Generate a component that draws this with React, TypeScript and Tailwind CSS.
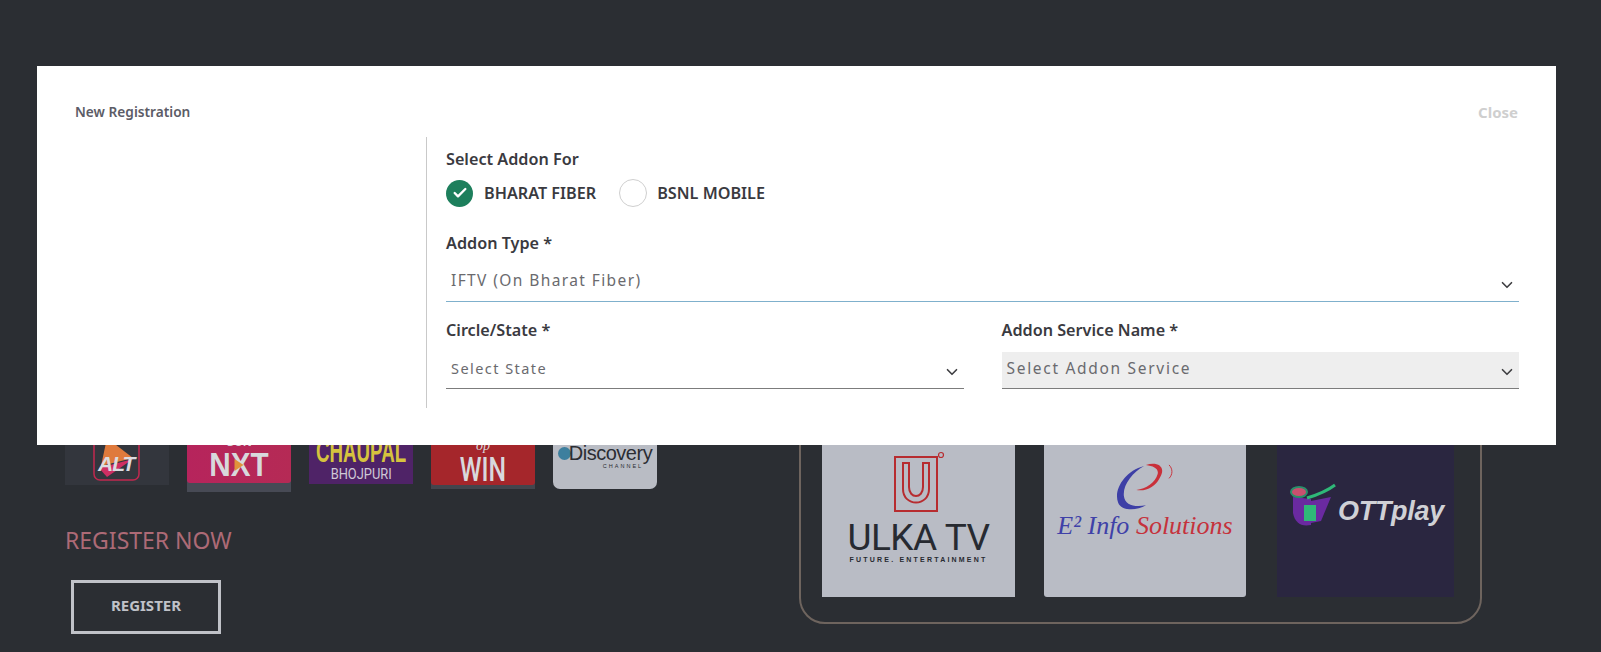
import { Check, ChevronDown } from 'lucide-react';

function AltTile() {
  return (
    <div className="flex h-[100px] w-[104px] flex-col items-center justify-end bg-[#33363d] pb-[3px]">
      <svg width="48" height="50" viewBox="0 0 48 50">
        <rect x="1" y="-10" width="45" height="58" rx="6" fill="none" stroke="#c2284f" strokeWidth="1.5" />
        <path d="M14 6 L40 26 L8 34 Z" fill="#df7a3c" />
        <path d="M6 36 L40 27 L14 45 Z" fill="#cf2f63" />
        <text x="5" y="39" fontFamily="Liberation Sans" fontSize="21" fontWeight="700" fontStyle="italic" fill="#dcdce0" letterSpacing="-1">ALT</text>
      </svg>
    </div>
  );
}

function SunTile() {
  return (
    <div className="flex h-[107px] w-[104px] flex-col bg-[#474a55]">
      <div className="flex h-[98px] flex-col items-center justify-end rounded-b-[3px] bg-gradient-to-r from-[#b6245c] to-[#b52a55] pb-[3px] text-[#d8d8dc]">
        <span className="font-['Liberation_Sans'] text-[12px] leading-[12px] font-bold">SUN</span>
        <div className="relative mt-[2px] w-[104px] text-center font-['Liberation_Sans'] text-[33px] leading-[30px] font-bold [transform:scaleX(0.9)]">
          NXT
          <span className="absolute top-[9px] left-[47px] h-0 w-0 border-y-[6px] border-l-[10px] border-y-transparent border-l-[#e0923a]" />
        </div>
      </div>
    </div>
  );
}

function ChaupalTile() {
  return (
    <div className="flex h-[99px] w-[104px] flex-col items-center justify-end bg-[#4f2367] pb-[3px]">
      <span className="font-['Liberation_Sans'] text-[32px] leading-[28px] font-bold text-[#d6c33e] [transform:scaleX(0.585)]">CHAUPAL</span>
      <span className="mt-[2px] font-['Roboto'] text-[14px] leading-[14px] text-[#cfc9d6] [transform:scaleX(0.92)]">BHOJPURI</span>
    </div>
  );
}

function WinTile() {
  return (
    <div className="flex h-[104px] w-[104px] flex-col bg-[#43454d]">
      <div className="flex h-[100px] flex-col items-center justify-end rounded-b-[3px] bg-[#a5262b] text-[#d8d8dc]">
        <span className="font-['Liberation_Serif'] text-[14px] leading-[14px] italic">op</span>
        <span className="mt-[2px] font-['Roboto'] text-[33px] leading-[30px] font-medium [transform:scaleX(0.75)]">WIN</span>
      </div>
    </div>
  );
}

function DiscoveryTile() {
  return (
    <div className="flex h-[104px] w-[104px] flex-col items-center justify-end rounded-b-[7px] bg-[#b9bcc4] pb-[20px] text-[#2b2d33]">
      <div className="flex items-center">
        <span className="h-[13px] w-[13px] rounded-full bg-[#3d7f9e]" />
        <span className="ml-[-2px] font-['Liberation_Sans'] text-[20px] leading-[20px] tracking-[-0.5px]">Discovery</span>
      </div>
      <span className="ml-[36px] font-['Liberation_Sans'] text-[5.5px] leading-[6px] tracking-[2px]">CHANNEL</span>
    </div>
  );
}

function UlkaTile() {
  return (
    <div className="flex h-[220px] w-[193px] flex-col items-center justify-end bg-[#b9bcc5] pb-[32px] text-[#272a31]">
      <svg width="56" height="62" viewBox="0 0 56 62" fill="none" stroke="#b72c30" strokeWidth="2">
        <path d="M4 6 H46 V60 H4 Z" />
        <path d="M12 12 H18 V36 C18 48 32 48 32 36 V12 H38 V38 C38 56 12 56 12 38 Z" />
        <circle cx="50" cy="4" r="2.5" strokeWidth="1.2" />
      </svg>
      <span className="mt-[8px] font-['Roboto'] text-[37px] leading-[34px] tracking-[-0.5px]">ULKA TV</span>
      <span className="font-['Liberation_Sans'] text-[7px] leading-[10px] font-bold tracking-[2.2px]">FUTURE. ENTERTAINMENT</span>
    </div>
  );
}

function E2Tile() {
  return (
    <div className="flex h-[220px] w-[202px] flex-col items-center justify-end rounded-b-[3px] bg-[#b9bcc5] pb-[58px]">
      <svg width="72" height="50" viewBox="0 0 70 52" fill="none">
        <path d="M34 3 C14 8 2 28 7 41 C10 50 26 50 36 44 C24 46 14 44 13 34 C12 22 22 10 34 3 Z" fill="#3d3fa6" />
        <path d="M36 2 C48 -2 58 4 50 16 C46 24 36 30 26 28 C36 27 46 20 48 12 C50 6 44 3 36 2 Z" fill="#c9303a" />
        <path d="M60 2 C64 6 64 12 60 16" stroke="#c9303a" strokeWidth="1" />
      </svg>
      <div className="font-['Liberation_Serif'] text-[26px] leading-[26px] italic">
        <span className="text-[#3f41a8]">E² Info </span>
        <span className="text-[#c5323c]">Solutions</span>
      </div>
    </div>
  );
}

function OttTile() {
  return (
    <div className="flex h-[220px] w-[177px] flex-col items-center justify-end bg-[#2a2640] pb-[66px]">
      <div className="flex items-center">
        <svg width="50" height="48" viewBox="0 0 50 48" fill="none">
          <path d="M6 14 L6 30 C8 40 14 44 24 42 L24 16 Z" fill="#6a2aa0" />
          <path d="M24 18 L44 14 L34 38 L24 40 Z" fill="#6a2aa0" />
          <rect x="17" y="22" width="12" height="16" fill="#2fb878" />
          <ellipse cx="12" cy="9" rx="8" ry="5" fill="#c9506f" stroke="#2a8f6a" strokeWidth="2" />
          <path d="M20 15 C30 12 40 8 48 2" stroke="#2fb878" strokeWidth="3" />
        </svg>
        <span className="mt-[8px] ml-[1px] font-['Liberation_Sans'] text-[27px] leading-[28px] font-bold tracking-[-0.3px] text-[#d0d1d6] italic">OTTplay</span>
      </div>
    </div>
  );
}

function SelectField({ label, value, disabled }: { label: string; value: string; disabled?: boolean }) {
  return (
    <div className="flex flex-1 flex-col">
      <label className="text-[16.2px] leading-[20px] font-semibold text-[#3a3a3f]">{label}</label>
      <div
        className={`mt-[12px] flex h-[37px] items-center justify-between border-b border-[#7c7c7c] pr-[3px] pl-[5px] text-[#6a6a6e] ${
          disabled ? 'bg-[#eeeeee] text-[15.5px] tracking-[1.7px]' : 'text-[14.5px] tracking-[1.45px]'
        }`}
      >
        <span className="pb-[2px]">{value}</span>
        <ChevronDown size={18} strokeWidth={2.2} className="mt-[3px] text-[#3f3f42]" />
      </div>
    </div>
  );
}

export default function App() {
  return (
    <div className="relative h-[652px] w-full overflow-hidden bg-[#2b2e33] font-['Noto_Sans',sans-serif]">
      {/* page behind the dialog */}
      <div className="flex items-start pl-[65px]">
        <div className="w-[734px] pt-[385px]">
          <div className="flex items-start gap-[18px]">
            <AltTile />
            <SunTile />
            <ChaupalTile />
            <WinTile />
            <DiscoveryTile />
          </div>
          <h2 className="mt-[32px] text-[23px] leading-[32px] text-[#ad6a76]">REGISTER NOW</h2>
          <button className="mt-[24px] ml-[6px] h-[54px] w-[150px] border-[3px] border-[#c0c2c8] pb-[3px] text-[15px] font-bold text-[#c0c2c8]">
            REGISTER
          </button>
        </div>
        <div className="mt-[300px] flex h-[324px] w-[683px] items-end rounded-b-[26px] border-2 border-[#6e645e] pb-[25px] pl-[21px]">
          <UlkaTile />
          <div className="ml-[29px]">
            <E2Tile />
          </div>
          <div className="ml-[31px]">
            <OttTile />
          </div>
        </div>
      </div>

      {/* dialog */}
      <div className="absolute top-[66px] left-[37px] h-[379px] w-[1519px] bg-white">
        <div className="flex h-[56px] items-start justify-between pt-[36px] pr-[38px] pl-[38px]">
          <span className="text-[13.7px] leading-[20px] font-semibold text-[#5c5c66]">New Registration</span>
          <span className="text-[15px] leading-[20px] font-bold text-[#cfcfcf]">Close</span>
        </div>
        <div className="mt-[15px] ml-[389px] h-[271px] border-l border-[#c9c9c9] pr-[37px] pl-[19px]">
          <div className="pt-[12px] text-[16.2px] leading-[20px] font-semibold text-[#3a3a3f]">Select Addon For</div>
          <div className="mt-[10px] flex items-center">
            <span className="flex h-[27px] w-[27px] items-center justify-center rounded-full bg-[#1d7f5c] text-white">
              <Check size={16} strokeWidth={3.5} />
            </span>
            <span className="ml-[11px] text-[16.2px] font-semibold text-[#3a3a3f]">BHARAT FIBER</span>
            <span className="ml-[23px] h-[28px] w-[28px] rounded-full border border-[#cfcfcf]" />
            <span className="ml-[10px] text-[16.2px] font-semibold text-[#3a3a3f]">BSNL MOBILE</span>
          </div>
          <div className="mt-[26px] text-[16.2px] leading-[20px] font-semibold text-[#3a3a3f]">Addon Type *</div>
          <div className="mt-[12px] flex h-[37px] items-center justify-between border-b border-[#7fb0cc] pr-[3px] pl-[5px] text-[15.5px] tracking-[1.4px] text-[#6a6a6e]">
            <span className="pb-[4px]">IFTV (On Bharat Fiber)</span>
            <ChevronDown size={18} strokeWidth={2.2} className="mt-[3px] text-[#3f3f42]" />
          </div>
          <div className="mt-[18px] flex gap-[38px]">
            <SelectField label="Circle/State *" value="Select State" />
            <SelectField label="Addon Service Name *" value="Select Addon Service" disabled />
          </div>
        </div>
      </div>
    </div>
  );
}
